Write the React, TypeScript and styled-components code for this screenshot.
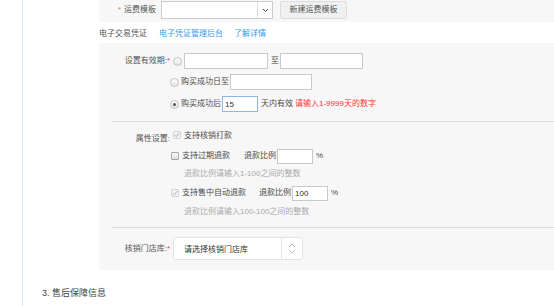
import React from "react";
import styled, { createGlobalStyle } from "styled-components";

const GlobalStyle = createGlobalStyle`
  html, body { margin: 0; padding: 0; background: #fff; }
  body {
    font-family: "Liberation Sans", "Noto Sans CJK SC", sans-serif;
    font-size: 8px;
    color: #4a4a4a;
  }
  * { box-sizing: border-box; }
`;

const Page = styled.div`
  display: flex;
  width: 554px;
  height: 306px;
  overflow: hidden;
`;

const Gutter = styled.div`
  width: 22px;
  flex-shrink: 0;
`;

const Main = styled.div`
  flex: 1;
  border-left: 1px solid #d5e7f7;
  display: flex;
  flex-direction: column;
`;

const TopBand = styled.div`
  margin-left: 76px;
  height: 22px;
  background: #f7f7f7;
  display: flex;
  align-items: flex-start;
  padding-top: 1px;
`;

const TopLabel = styled.div`
  width: 57px;
  height: 18px;
  line-height: 18px;
  text-align: right;
  color: #555;
  flex-shrink: 0;
`;

const OrangeStar = styled.span`
  color: #f08040;
  margin-right: 3px;
`;

const Select = styled.div`
  margin-left: 5px;
  width: 112px;
  height: 18px;
  border: 1px solid #ccc;
  background: #fff;
  display: flex;
  justify-content: flex-end;
`;

const SelectArrow = styled.div`
  width: 15px;
  border-left: 1px solid #ddd;
  display: flex;
  align-items: center;
  justify-content: center;
`;

const Button = styled.div`
  margin-left: 7px;
  width: 67px;
  height: 18px;
  line-height: 16px;
  border: 1px solid #ddd;
  border-radius: 2px;
  background: #f0f0f0;
  text-align: center;
  color: #555;
`;

const VoucherRow = styled.div`
  margin-left: 76px;
  height: 21px;
  display: flex;
  align-items: center;
  color: #555;
`;

const Link = styled.span<{ $gap: number }>`
  color: #3399ee;
  margin-left: ${(p) => p.$gap}px;
`;

const Panel = styled.div`
  margin-left: 76px;
  background: #f7f7f7;
  padding: 10px 0 10px 0;
  display: flex;
  flex-direction: column;
`;

const Row = styled.div<{ $mt?: number; $indent?: number; $h?: number; $align?: string }>`
  display: flex;
  align-items: ${(p) => p.$align ?? "center"};
  height: ${(p) => p.$h ?? 16}px;
  margin-top: ${(p) => p.$mt ?? 0}px;
  padding-left: ${(p) => p.$indent ?? 0}px;
`;

const FieldLabel = styled.div<{ $pt?: number }>`
  width: 71px;
  flex-shrink: 0;
  text-align: right;
  color: #555;
  line-height: 16px;
  padding-top: ${(p) => p.$pt ?? 0}px;
  white-space: nowrap;
`;

const Star = styled.span`
  color: #f33;
`;

const Text = styled.span<{ $ml?: number; $color?: string; $lh?: number }>`
  margin-left: ${(p) => p.$ml ?? 0}px;
  color: ${(p) => p.$color ?? "#4a4a4a"};
  line-height: ${(p) => p.$lh ?? 16}px;
  white-space: nowrap;
`;

const Radio = styled.span<{ $ml?: number; $checked?: boolean }>`
  margin-left: ${(p) => p.$ml ?? 0}px;
  width: 9px;
  height: 9px;
  flex-shrink: 0;
  border-radius: 50%;
  border: 1px solid #c2c2c2;
  background: linear-gradient(#fdfdfd, #e4e4e4);
  display: flex;
  align-items: center;
  justify-content: center;
  &::after {
    content: "";
    display: ${(p) => (p.$checked ? "block" : "none")};
    width: 3px;
    height: 3px;
    border-radius: 50%;
    background: #555;
  }
`;

const Checkbox = styled.span<{ $ml?: number; $checked?: boolean; $mt?: number }>`
  margin-left: ${(p) => p.$ml ?? 0}px;
  margin-top: ${(p) => p.$mt ?? 0}px;
  width: 8px;
  height: 8px;
  flex-shrink: 0;
  border: 1px solid ${(p) => (p.$checked ? "#d6d6d6" : "#a8a8a8")};
  border-radius: 1px;
  background: ${(p) => (p.$checked ? "#f2f2f2" : "linear-gradient(#fdfdfd, #dedede)")};
  display: flex;
  align-items: center;
  justify-content: center;
`;

const Input = styled.div<{ $w: number; $ml?: number; $h?: number; $focus?: boolean }>`
  margin-left: ${(p) => p.$ml ?? 0}px;
  width: ${(p) => p.$w}px;
  height: ${(p) => p.$h ?? 16}px;
  flex-shrink: 0;
  background: #fff;
  border: 1px solid ${(p) => (p.$focus ? "#8fb6e6" : "#c9c9c9")};
  padding-left: 2px;
  display: flex;
  align-items: center;
  color: #333;
  font-size: 8px;
`;

const Divider = styled.div<{ $mt: number }>`
  margin-top: ${(p) => p.$mt}px;
  margin-left: 13px;
  height: 1px;
  background: #dedede;
`;

const Hint = styled.div<{ $mt: number }>`
  margin-top: ${(p) => p.$mt}px;
  padding-left: 85px;
  height: 12px;
  line-height: 12px;
  color: #aaa;
  white-space: nowrap;
`;

const StoreSelect = styled.div`
  margin-left: 3px;
  width: 130px;
  height: 23px;
  background: #fff;
  border: 1px solid #e2e2e2;
  border-radius: 3px;
  display: flex;
  align-items: stretch;
`;

const StorePlaceholder = styled.div`
  flex: 1;
  padding-left: 10px;
  display: flex;
  align-items: center;
  color: #333;
`;

const StoreArrow = styled.div`
  width: 21px;
  border-left: 1px solid #e2e2e2;
  display: flex;
  align-items: center;
  justify-content: center;
`;

const Heading = styled.div`
  margin-top: 16px;
  padding-left: 19px;
  height: 14px;
  line-height: 14px;
  font-size: 9px;
  color: #444;
`;

const Check = () => (
  <svg width="6" height="6" viewBox="0 0 6 6">
    <path d="M0.8 3.2 L2.4 4.7 L5.2 1.2" stroke="#b0b0b0" strokeWidth="1" fill="none" />
  </svg>
);

export default function App() {
  return (
    <>
      <GlobalStyle />
      <Page>
        <Gutter />
        <Main>
          <TopBand>
            <TopLabel>
              <OrangeStar>*</OrangeStar>运费模板
            </TopLabel>
            <Select>
              <SelectArrow>
                <svg width="7" height="5" viewBox="0 0 7 5">
                  <path d="M1 1 L3.5 3.5 L6 1" stroke="#444" strokeWidth="1" fill="none" />
                </svg>
              </SelectArrow>
            </Select>
            <Button>新建运费模板</Button>
          </TopBand>

          <VoucherRow>
            电子交易凭证
            <Link $gap={12}>电子凭证管理后台</Link>
            <Link $gap={11}>了解详情</Link>
          </VoucherRow>

          <Panel>
            <Row>
              <FieldLabel>
                设置有效期:<Star>*</Star>
              </FieldLabel>
              <Radio $ml={3} />
              <Input $w={84} $ml={2} />
              <Text $ml={3}>至</Text>
              <Input $w={83} $ml={1} />
            </Row>
            <Row $mt={5} $indent={71}>
              <Radio />
              <Text $ml={2}>购买成功日至</Text>
              <Input $w={82} $ml={1} />
            </Row>
            <Row $mt={6} $indent={71}>
              <Radio $checked />
              <Text $ml={2}>购买成功后</Text>
              <Input $w={36} $ml={1} $focus>
                15
              </Input>
              <Text $ml={3}>天内有效</Text>
              <Text $ml={2} $color="#f33">
                请输入1-9999天的数字
              </Text>
            </Row>

            <Divider $mt={9} />

            <Row $mt={6} $align="flex-start">
              <FieldLabel $pt={3}>属性设置:</FieldLabel>
              <Checkbox $ml={3} $mt={3} $checked>
                <Check />
              </Checkbox>
              <Text $ml={3}>支持核销打款</Text>
            </Row>
            <Row $mt={4} $indent={72}>
              <Checkbox />
              <Text $ml={3}>支持过期退款</Text>
              <Text $ml={14}>退款比例</Text>
              <Input $w={36} $h={15} $ml={1} />
              <Text $ml={3}>%</Text>
            </Row>
            <Hint $mt={4}>退款比例请输入1-100之间的整数</Hint>
            <Row $mt={5} $indent={72}>
              <Checkbox $checked>
                <Check />
              </Checkbox>
              <Text $ml={3}>支持售中自动退款</Text>
              <Text $ml={13}>退款比例</Text>
              <Input $w={36} $h={15} $ml={1}>
                100
              </Input>
              <Text $ml={3}>%</Text>
            </Row>
            <Hint $mt={5}>退款比例请输入100-100之间的整数</Hint>

            <Divider $mt={9} />

            <Row $mt={9} $h={23}>
              <FieldLabel>
                核销门店库:<Star>*</Star>
              </FieldLabel>
              <StoreSelect>
                <StorePlaceholder>请选择核销门店库</StorePlaceholder>
                <StoreArrow>
                  <svg width="8" height="11" viewBox="0 0 8 11">
                    <path d="M1 4 L4 1 L7 4" stroke="#bbb" strokeWidth="1" fill="none" />
                    <path d="M1 7 L4 10 L7 7" stroke="#bbb" strokeWidth="1" fill="none" />
                  </svg>
                </StoreArrow>
              </StoreSelect>
            </Row>
          </Panel>

          <Heading>3. 售后保障信息</Heading>
        </Main>
      </Page>
    </>
  );
}
